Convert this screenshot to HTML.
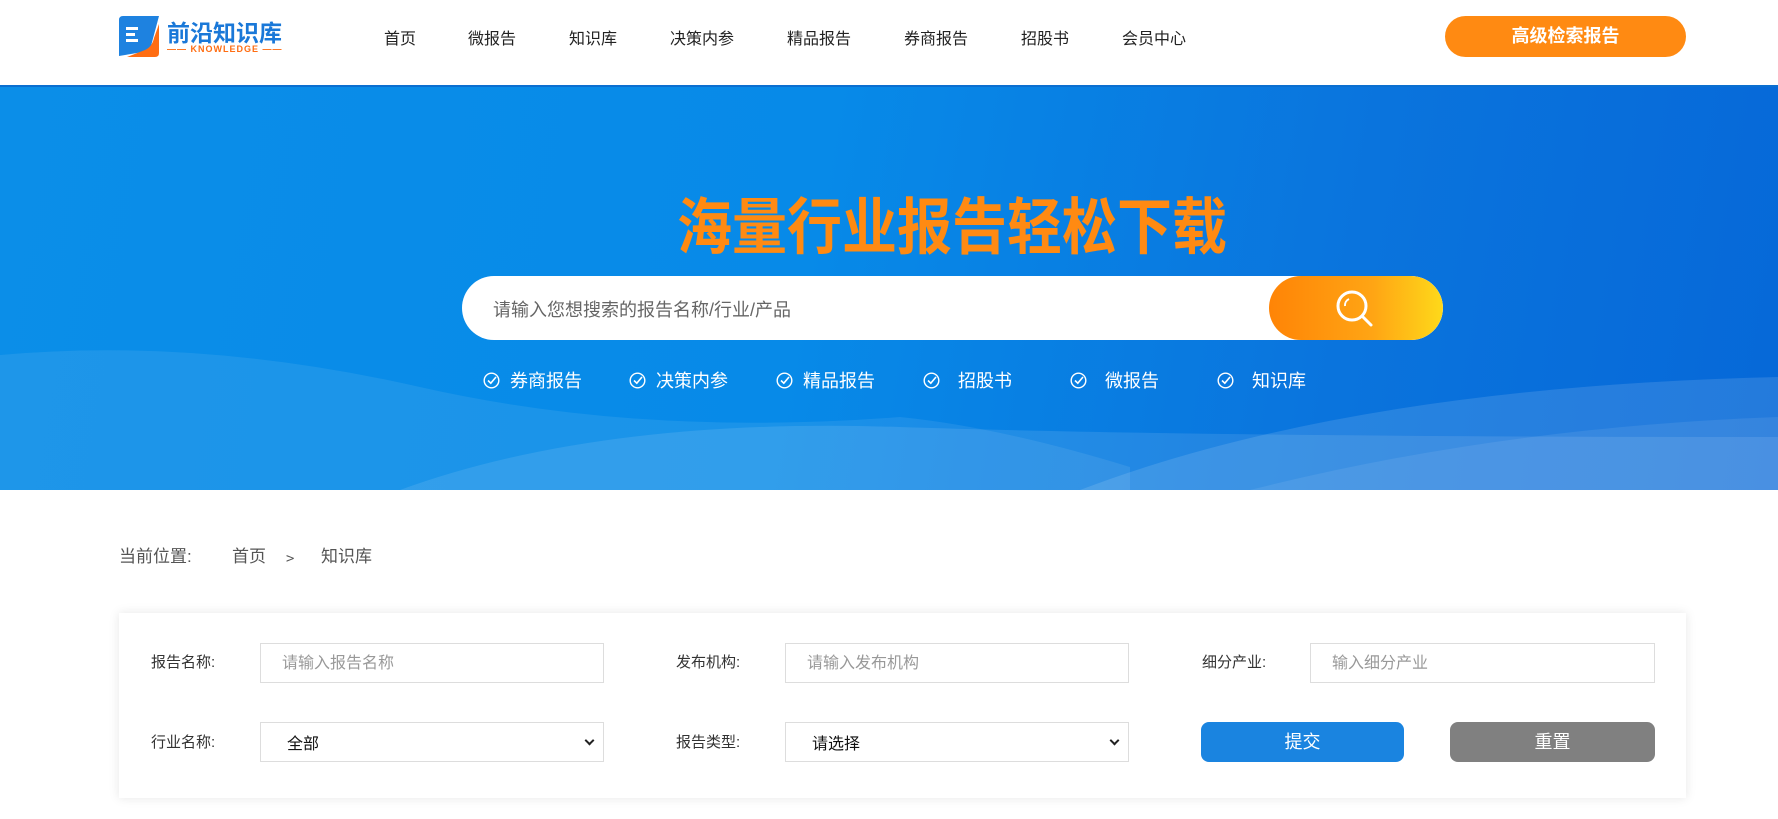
<!DOCTYPE html>
<html><head><meta charset="utf-8"><style>
*{margin:0;padding:0;box-sizing:border-box}
body{width:1778px;height:819px;overflow:hidden;background:#fff;font-family:"Liberation Sans","Noto Sans CJK SC",sans-serif;position:relative}
.hdr{position:absolute;left:0;top:0;width:1778px;height:87px;background:#fff;border-bottom:2px solid #0b6fd0}
.nav{position:absolute;top:25px;font-size:16px;color:#222}
.btn1{position:absolute;left:1445px;top:16px;width:241px;height:41px;border-radius:21px;background:#ff8a12;color:#fff;font-weight:bold;font-size:18px;text-align:center;line-height:41px}
.ban{position:absolute;left:0;top:87px;width:1778px;height:403px;background:linear-gradient(100deg,#0b8ee8 0%,#078ae8 45%,#0a74dd 75%,#0668d8 100%);overflow:hidden}
.title{position:absolute;left:63px;width:1778px;top:108px;text-align:center;font-size:55px;font-weight:bold;color:#ff8a12;letter-spacing:0px;line-height:64px;transform:scaleY(1.12)}
.sb{position:absolute;left:462px;top:189px;width:981px;height:64px;background:#fff;border-radius:32px;overflow:hidden}
.sb span{position:absolute;left:31px;top:20px;font-size:18px;color:#666}
.sbb{position:absolute;right:0;top:0;width:174px;height:64px;border-radius:32px;background:linear-gradient(90deg,#ff8406,#ffa514 60%,#fed91a)}
.tag{position:absolute;top:280px;color:#fff;font-size:18px}
.tag svg{vertical-align:-2px;margin-right:10px}
.bc{position:absolute;top:545px;font-size:17px;color:#555;line-height:24px}
.panel{position:absolute;left:119px;top:613px;width:1567px;height:185px;background:#fff;box-shadow:0 0 10px rgba(0,0,0,.1)}
.lb{position:absolute;font-size:15px;color:#333}
.in{position:absolute;height:40px;border:1px solid #ddd;background:#fff;font-size:16px;color:#999;padding-left:21px;line-height:40px}
.sel{color:#111;padding-left:26px;line-height:44px}
.sel:after{content:"";position:absolute;right:10px;top:14px;width:5px;height:5px;border-right:2px solid #222;border-bottom:2px solid #222;transform:rotate(45deg)}
.b{position:absolute;top:722px;height:40px;border-radius:8px;color:#fff;font-size:18px;text-align:center;line-height:40px}
</style></head><body>
<div class="hdr">
<svg style="position:absolute;left:119px;top:16px" width="40" height="41" viewBox="0 0 40 41"><path d="M4 0H40L32 30Q30 35 24 36L0 40V4Q0 0 4 0Z" fill="#1e82e0"/><path d="M40 8V37Q40 41 36 41H8L26 34Q33 31 35 22Z" fill="#ff6d12"/><rect x="7" y="11" width="12" height="3" fill="#fff"/><rect x="7" y="17" width="9" height="3" fill="#fff"/><rect x="7" y="23" width="12" height="3" fill="#fff"/></svg>
<div style="position:absolute;left:167px;top:14px;font-size:23px;font-weight:bold;color:#1a78d8;letter-spacing:0px">前沿知识库</div>
<div style="position:absolute;left:167px;top:44px;font-size:9px;font-weight:bold;color:#ff6d12;letter-spacing:1px">—— KNOWLEDGE ——</div>
<div class="nav" style="left:384px">首页</div>
<div class="nav" style="left:468px">微报告</div>
<div class="nav" style="left:569px">知识库</div>
<div class="nav" style="left:670px">决策内参</div>
<div class="nav" style="left:787px">精品报告</div>
<div class="nav" style="left:904px">券商报告</div>
<div class="nav" style="left:1021px">招股书</div>
<div class="nav" style="left:1122px">会员中心</div>
<div class="btn1">高级检索报告</div>
</div>
<div class="ban">
<svg style="position:absolute;left:0;top:0" width="1778" height="403"><path d="M0 268Q200 250 420 300T900 330Q1000 340 1130 380L1130 403H0Z" fill="#fff" opacity=".08"/><path d="M400 403Q600 330 900 340T1778 350V403Z" fill="#fff" opacity=".1"/><path d="M1080 403Q1350 300 1778 290V403Z" fill="#fff" opacity=".12"/><path d="M1250 403Q1500 340 1778 330V403Z" fill="#fff" opacity=".08"/></svg>
<div class="title">海量行业报告轻松下载</div>
<div class="sb"><span>请输入您想搜索的报告名称/行业/产品</span><div class="sbb"><svg style="position:absolute;left:66px;top:13px" width="42" height="40" viewBox="0 0 42 40"><circle cx="17" cy="17" r="14" fill="none" stroke="#fff" stroke-width="3"/><path d="M27 27L36 36" stroke="#fff" stroke-width="3" stroke-linecap="round"/><path d="M10 17A7 7 0 0 1 14 10" stroke="#fff" stroke-width="2" fill="none"/></svg></div></div>
<div class="tag" style="left:483px"><svg width="17" height="17" viewBox="0 0 17 17"><circle cx="8.5" cy="8.5" r="7.3" fill="none" stroke="#fff" stroke-width="1.4"/><path d="M5 8.5L7.8 11.2L13 5" stroke="#fff" stroke-width="1.6" fill="none"/></svg>券商报告</div>
<div class="tag" style="left:629px"><svg width="17" height="17" viewBox="0 0 17 17"><circle cx="8.5" cy="8.5" r="7.3" fill="none" stroke="#fff" stroke-width="1.4"/><path d="M5 8.5L7.8 11.2L13 5" stroke="#fff" stroke-width="1.6" fill="none"/></svg>决策内参</div>
<div class="tag" style="left:776px"><svg width="17" height="17" viewBox="0 0 17 17"><circle cx="8.5" cy="8.5" r="7.3" fill="none" stroke="#fff" stroke-width="1.4"/><path d="M5 8.5L7.8 11.2L13 5" stroke="#fff" stroke-width="1.6" fill="none"/></svg>精品报告</div>
<div class="tag" style="left:923px"><svg width="17" height="17" viewBox="0 0 17 17" style="margin-right:18px"><circle cx="8.5" cy="8.5" r="7.3" fill="none" stroke="#fff" stroke-width="1.4"/><path d="M5 8.5L7.8 11.2L13 5" stroke="#fff" stroke-width="1.6" fill="none"/></svg>招股书</div>
<div class="tag" style="left:1070px"><svg width="17" height="17" viewBox="0 0 17 17" style="margin-right:18px"><circle cx="8.5" cy="8.5" r="7.3" fill="none" stroke="#fff" stroke-width="1.4"/><path d="M5 8.5L7.8 11.2L13 5" stroke="#fff" stroke-width="1.6" fill="none"/></svg>微报告</div>
<div class="tag" style="left:1217px"><svg width="17" height="17" viewBox="0 0 17 17" style="margin-right:18px"><circle cx="8.5" cy="8.5" r="7.3" fill="none" stroke="#fff" stroke-width="1.4"/><path d="M5 8.5L7.8 11.2L13 5" stroke="#fff" stroke-width="1.6" fill="none"/></svg>知识库</div>
</div>
<div class="bc" style="left:119px">当前位置:</div>
<div class="bc" style="left:232px">首页</div>
<div class="bc" style="left:286px;top:547px;font-family:'Noto Sans CJK SC',sans-serif;font-size:15px">&gt;</div>
<div class="bc" style="left:321px">知识库</div>
<div class="panel"></div>
<div class="lb" style="left:151px;top:651px">报告名称:</div>
<div class="lb" style="left:676px;top:651px">发布机构:</div>
<div class="lb" style="left:1202px;top:651px">细分产业:</div>
<div class="lb" style="left:151px;top:731px">行业名称:</div>
<div class="lb" style="left:676px;top:731px">报告类型:</div>
<div class="in" style="left:260px;top:643px;width:344px">请输入报告名称</div>
<div class="in" style="left:785px;top:643px;width:344px">请输入发布机构</div>
<div class="in" style="left:1310px;top:643px;width:345px">输入细分产业</div>
<div class="in sel" style="left:260px;top:722px;width:344px">全部</div>
<div class="in sel" style="left:785px;top:722px;width:344px">请选择</div>
<div class="b" style="left:1201px;width:203px;background:#1a84e0">提交</div>
<div class="b" style="left:1450px;width:205px;background:#808080">重置</div>
</body></html>
